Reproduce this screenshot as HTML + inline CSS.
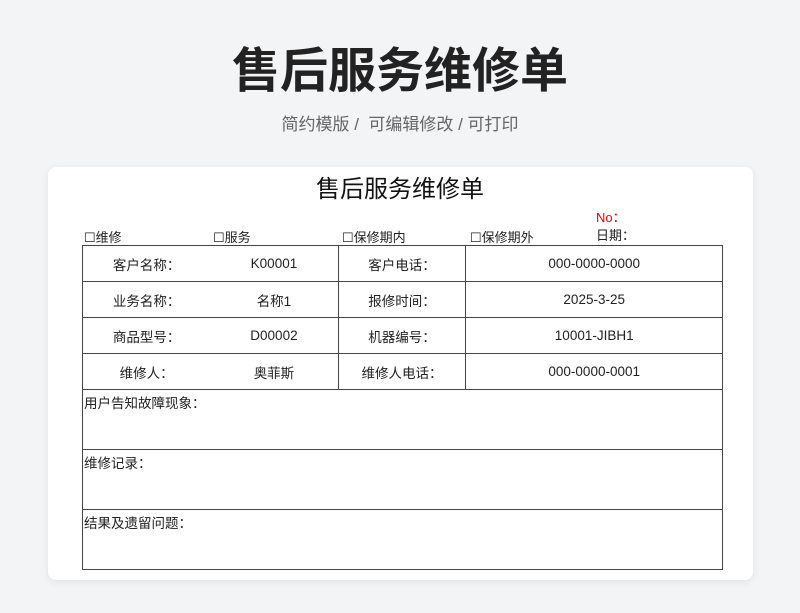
<!DOCTYPE html>
<html><head><meta charset="utf-8"><style>
*{margin:0;padding:0;box-sizing:border-box}
body{width:800px;height:613px;background:#f3f4f6;font-family:"Liberation Sans","Noto Sans CJK SC",sans-serif;position:relative;overflow:hidden;color:#222}
.t{position:absolute;left:0;width:800px;text-align:center}
.card{position:absolute;left:48px;top:167px;width:705px;height:413px;background:#fff;border-radius:8px;box-shadow:0 2px 8px rgba(0,0,0,.08)}
.a{position:absolute;font-size:13px;white-space:nowrap}
table{position:absolute;left:82px;top:245px;width:641px;border-collapse:collapse;font-size:13.5px}
td{border:1px solid #444;height:36px;text-align:center;padding:0}
td.b{height:60px;text-align:left;vertical-align:top;padding:2px 1px}
</style></head><body>
<div class="t" style="top:39px;font-size:48px;font-weight:bold;color:#222;line-height:66px">售后服务维修单</div>
<div class="t" style="top:113px;font-size:17px;color:#666;line-height:24px">简约模版 /&nbsp; 可编辑修改 / 可打印</div>
<div class="card"></div>
<div class="t" style="top:174px;font-size:24px;line-height:32px;color:#111">售后服务维修单</div>
<div class="a" style="left:596px;top:207px;color:#e00">No：</div>
<div class="a" style="left:84px;top:227px">☐维修</div>
<div class="a" style="left:213px;top:227px">☐服务</div>
<div class="a" style="left:342px;top:227px">☐保修期内</div>
<div class="a" style="left:470px;top:227px">☐保修期外</div>
<div class="a" style="left:596px;top:225px">日期：</div>
<table>
<colgroup><col style="width:128px"><col style="width:128px"><col style="width:128px"><col style="width:257px"></colgroup>
<tr><td style="border-right:none">客户名称：</td><td style="border-left:none">K00001</td><td>客户电话：</td><td>000-0000-0000</td></tr>
<tr><td style="border-right:none">业务名称：</td><td style="border-left:none">名称1</td><td>报修时间：</td><td>2025-3-25</td></tr>
<tr><td style="border-right:none">商品型号：</td><td style="border-left:none">D00002</td><td>机器编号：</td><td>10001-JIBH1</td></tr>
<tr><td style="border-right:none">维修人：</td><td style="border-left:none">奥菲斯</td><td>维修人电话：</td><td>000-0000-0001</td></tr>
<tr><td class="b" colspan="4">用户告知故障现象：</td></tr>
<tr><td class="b" colspan="4">维修记录：</td></tr>
<tr><td class="b" colspan="4">结果及遗留问题：</td></tr>
</table>
</body></html>
